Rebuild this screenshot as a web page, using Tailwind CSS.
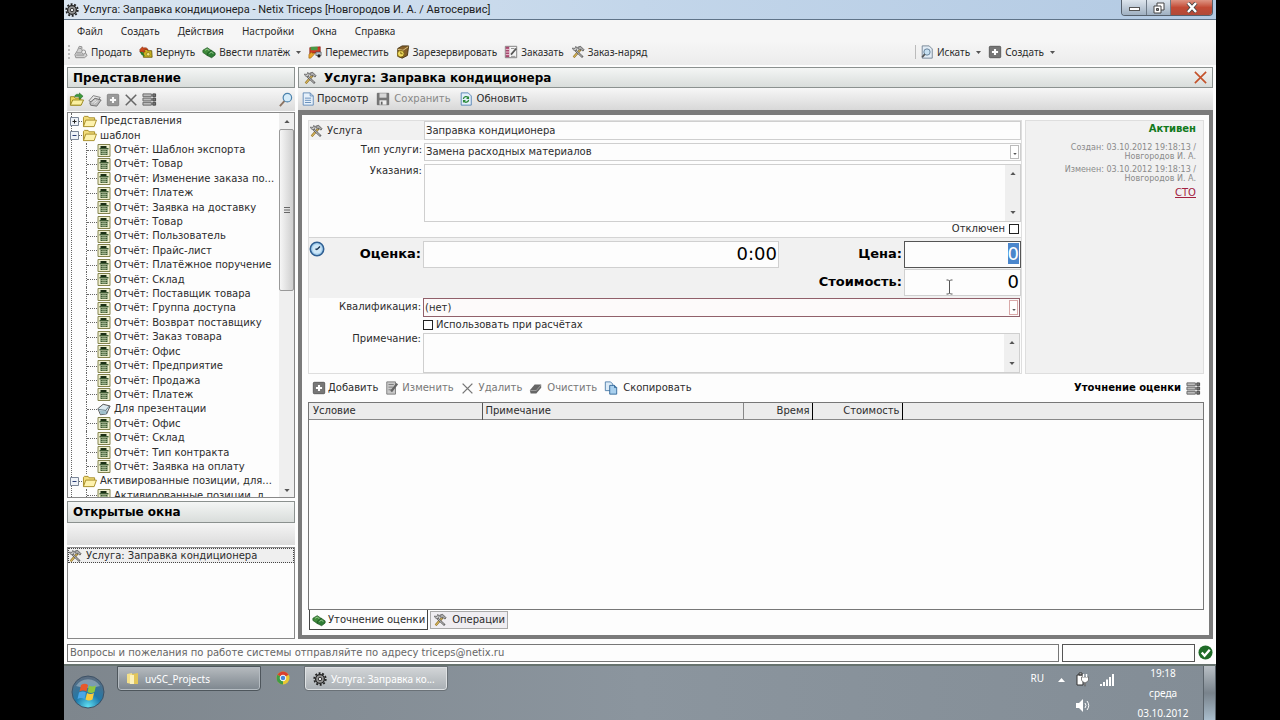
<!DOCTYPE html>
<html lang="ru">
<head>
<meta charset="utf-8">
<title>Услуга: Заправка кондиционера - Netix Triceps</title>
<script src="https://cdn.jsdelivr.net/npm/@tailwindcss/browser@4"></script>
</head>
<body class="min-h-screen bg-black font-['DejaVu_Sans',Verdana,sans-serif] text-[10px] leading-[14px] text-[#2c2c2c]">

<svg class="hidden" aria-hidden="true">
  <symbol id="gear" viewBox="0 0 16 16"><circle cx="8" cy="8" r="5" fill="#999" stroke="#222" stroke-width="1.5"/><circle cx="8" cy="8" r="6.600" fill="none" stroke="#222" stroke-width="2" stroke-dasharray="2.2 1.9"/><circle cx="8" cy="8" r="2" fill="#eee" stroke="#222"/></symbol>
  <symbol id="tools" viewBox="0 0 16 16"><path d="M3 14 11 5" stroke="#8a6a20" stroke-width="2.6"/><path d="M3 14 10.500 5.500" stroke="#e8c869" stroke-width="1.200"/><path d="M5 6 13.500 14" stroke="#555" stroke-width="2.400"/><path d="M5 6 13 13.500" stroke="#ddd" stroke-width="1"/><path d="M1.500 3.500 3 6l3 .5L7 4 5.500 1.500 4.500 4z" fill="#ccc" stroke="#555" stroke-width=".8"/><path d="M7.500 2.500 11 1.500l4 4-1.500 1.500L11.500 5 10 6 8.500 4.500z" fill="#aaa" stroke="#444" stroke-width=".8"/></symbol>
  <symbol id="sell" viewBox="0 0 16 16"><path d="M4 6 6 1.500 9 2v4l3 1 3 5-3 2.500H2L1 11z" fill="#d2d2d2" stroke="#888"/><circle cx="11" cy="8" r="2.300" fill="#eee" stroke="#888"/><path d="M3 9h5M2.500 11.500h9M6 4h2" stroke="#888"/></symbol>
  <symbol id="return" viewBox="0 0 16 16"><path d="M5 5h4l1 1.500h4.500L15 14H5z" fill="#c9b21f" stroke="#6c5b0c"/><circle cx="10.500" cy="10.500" r="2" fill="#f3e680" stroke="#7d6d10" stroke-width=".7"/><path d="M1 5 4 2l1 1.500c3-1 5 0 5.500 2.500-2-1.500-3.500-1-4.500 0L7 8H1z" fill="#cc4a1e" stroke="#7c2a0c" stroke-width=".6"/><path d="M1 8h3l3 5-4-1.500z" fill="#2d7a2a"/></symbol>
  <symbol id="money" viewBox="0 0 16 16"><path d="M1 6 6 3l5 3.500v3L6 12 1 8.500z" fill="#3f8a3a" stroke="#1f5a22" stroke-width=".8"/><path d="M6 9.500 10.500 6 15 9v2.500L11 14.500 6 12z" fill="#2f7d35" stroke="#1a4f1e" stroke-width=".8"/><path d="M3.500 6 6 4.800 8.500 6.500M8.500 9.800l2-1.600 2.500 1.500" stroke="#a5d39a" fill="none"/></symbol>
  <symbol id="truck" viewBox="0 0 16 16"><path d="M2 3 14 2v7H6L2 11z" fill="#d33a24" stroke="#7d1e12" stroke-width=".7"/><path d="M3 2h8v4H3z" fill="#4a9a45"/><path d="M9 8h6v4H9z" fill="#b9c4cc" stroke="#444" stroke-width=".7"/><circle cx="12.500" cy="12.500" r="1.800" fill="#222"/><path d="M1 11 4 8l1 1.500h3L6 12l-3 3H1z" fill="#e9a52a" stroke="#8d5b0b" stroke-width=".6"/></symbol>
  <symbol id="box" viewBox="0 0 16 16"><path d="M2 4 7 1h7.500L13 12l-6 3-5-2z" fill="#85602a" stroke="#42300f"/><path d="m2 5 6 1 6-4" fill="none" stroke="#e6cf8a"/><circle cx="5.500" cy="10" r="3.800" fill="#f1dc60" stroke="#7a6412"/><path d="M5.500 7.500V10h2" fill="none" stroke="#6b570c"/></symbol>
  <symbol id="order" viewBox="0 0 16 16"><path d="M1.500 1.500h13v13h-13z" fill="#f4f4f4" stroke="#777"/><path d="M2 2h4v12H2z" fill="#a9486f"/><path d="M2 5h4M2 8h4M2 11h4" stroke="#f1d9e3"/><path d="M8 11 14 4" stroke="#555" stroke-width="2"/><path d="M8 4h4M8 13h5" stroke="#888"/></symbol>
  <symbol id="search-doc" viewBox="0 0 16 16"><path d="M2.500 1h8L14 4.500V15H2.500z" fill="#e2ecf5" stroke="#6e7f90"/><circle cx="8" cy="8" r="3.600" fill="#c6dff0" stroke="#5a7790"/><path d="M5.500 10.500 2.500 14" stroke="#555" stroke-width="2"/></symbol>
  <symbol id="plus" viewBox="0 0 16 16"><rect x="1.500" y="1.500" width="13" height="13" rx="1" fill="#777" stroke="#555"/><path d="M8 4.500v7M4.500 8h7" stroke="#fff" stroke-width="2.400"/></symbol>
  <symbol id="open" viewBox="0 0 16 16"><path d="M1.500 14V5h4l1 1.500h6V14z" fill="#efd75c" stroke="#97851d"/><path d="M1.500 14 4 8.500h11.500L13 14z" fill="#fbf0a0" stroke="#97851d"/><path d="M6 5c1-3 3-3 5-2V1l4 3.500L11 8V5.500C9 4.500 8 5 6 5z" fill="#3c9a3a" stroke="#1c6420" stroke-width=".6"/></symbol>
  <symbol id="cards" viewBox="0 0 16 16"><path d="m1 9 5-6 8 2-5 7z" fill="#e6e6e6" stroke="#777"/><path d="m2 11 6-5 7 2-5 7-7-1z" fill="#bbb" stroke="#666"/><path d="m5 11 4-3M7 12l4-3" stroke="#eee"/></symbol>
  <symbol id="cross" viewBox="0 0 16 16"><path d="M2 2 14 14M14 2 2 14" stroke="currentColor" stroke-width="1.700"/></symbol>
  <symbol id="grid" viewBox="0 0 16 16"><path d="M1 2h9v3H1zM1 6.500h9v3H1zM1 11h9v3H1z" fill="#bbb" stroke="#666"/><path d="M11.500 2h3v3h-3zM11.500 6.500h3v3h-3zM11.500 11h3v3h-3z" fill="#777" stroke="#444"/></symbol>
  <symbol id="lens" viewBox="0 0 16 16"><path d="M7 9.500 2 15" stroke="#8d7462" stroke-width="2"/><circle cx="10" cy="6" r="4.500" fill="#d6ecf9" stroke="#4c83ad" stroke-width="1.300"/></symbol>
  <symbol id="doc" viewBox="0 0 16 16"><path d="M2.500 1h8L14 4.500V15H2.500z" fill="#e6f0fa" stroke="#5b86b5"/><path d="M10.500 1v3.500H14M4.500 7h7M4.500 9.500h7M4.500 12h7" fill="none" stroke="#5b86b5"/></symbol>
  <symbol id="save" viewBox="0 0 16 16"><path d="M1.500 1.500h13v13h-13z" fill="#777" stroke="#666"/><path d="M4 1.500h8v5H4z" fill="#d8d8d8"/><path d="M4 9.500h8v5H4z" fill="#eee"/><path d="M5.500 11h2v3.500h-2z" fill="#666"/></symbol>
  <symbol id="refresh" viewBox="0 0 16 16"><path d="M2.500 1h8L14 4.500V15H2.500z" fill="#e4f0fb" stroke="#4e7fb0"/><path d="M5 8c.5-3 4-3.500 5.500-1.500M11 9c-.5 3-4 3.500-5.500 1.500" fill="none" stroke="#2c8a3a" stroke-width="1.500"/><path d="M11.500 4.500v3.500H8zM4.500 12.500V9H8z" fill="#2c8a3a"/></symbol>
  <symbol id="folder" viewBox="0 0 16 14"><path d="M1.500 12.500v-10l1-1h4l1 1.500h6v3" fill="#f2dc7a" stroke="#a58a25"/><path d="m1.500 12.500 2.500-7h11.500l-2.500 7z" fill="#fdf2ae" stroke="#a58a25"/></symbol>
  <symbol id="report" viewBox="0 0 13 13"><path d="M.5.500h12v12H.5z" fill="#efefcf" stroke="#84844e"/><path d="M3 2h6v2H3z" fill="#1c3016"/><path d="M2 4h9v1.500H2zM3 6h7v5H3z" fill="#3f5d34"/><path d="M3 7.500h7M3 9.500h7M5.500 6v5M7.500 6v5" stroke="#c9d6b2" stroke-width=".6"/></symbol>
  <symbol id="tag" viewBox="0 0 16 14"><path d="m1 6 6-5 8 2-4 9-7 1z" fill="#dceaf0" stroke="#444"/><path d="m2 7 8 1 4-5M10 8l1 4" fill="none" stroke="#537080"/><path d="m2.500 8 7 1 1 3-6 .5z" fill="#9fc0cb"/></symbol>
  <symbol id="minus-box" viewBox="0 0 9 9"><path d="M.5.500h8v8h-8z" fill="#eef2f8" stroke="#7b8698"/><path d="M2.500 4.500h4" stroke="#2b3f77"/></symbol>
  <symbol id="plus-box" viewBox="0 0 9 9"><path d="M.5.500h8v8h-8z" fill="#eef2f8" stroke="#7b8698"/><path d="M2.500 4.500h4M4.500 2.500v4" stroke="#222"/></symbol>
  <symbol id="clock" viewBox="0 0 16 16"><circle cx="8" cy="8" r="6.700" fill="#a9d2ef" stroke="#2f5f93" stroke-width="1.600"/><circle cx="8" cy="8" r="4.500" fill="#cfe7f7"/><path d="M8 8.500 11 5.500M8 8.500 6.500 8" stroke="#1c3350" stroke-width="1.400"/></symbol>
  <symbol id="edit" viewBox="0 0 16 16"><path d="M2 1h10v14H2z" fill="#c9c9c9" stroke="#777"/><path d="M4 4h6M4 7h5M4 10h4" stroke="#777"/><path d="M7 12 14 3" stroke="#666" stroke-width="2.600"/></symbol>
  <symbol id="eraser" viewBox="0 0 16 16"><path d="m1 10 6-7h8v4l-6 7H2z" fill="#666"/><path d="M1.500 10.500H9L14.500 4" fill="none" stroke="#aaa"/></symbol>
  <symbol id="copy" viewBox="0 0 16 16"><path d="M1.500 1h6L10 3.500V11H1.500z" fill="#dcebf7" stroke="#4a7aa8"/><path d="M6.500 5h5.500l2.500 2.500V15h-8z" fill="#a9d0ee" stroke="#2f6597"/><path d="M12 5v2.500h2.500" fill="none" stroke="#2f6597"/></symbol>
  <symbol id="up" viewBox="0 0 7 4"><path d="M0 4 3.500 0 7 4z" fill="#555"/></symbol>
  <symbol id="down" viewBox="0 0 7 4"><path d="M0 0h7L3.500 4z" fill="#555"/></symbol>
  <symbol id="ok" viewBox="0 0 16 16"><circle cx="8" cy="8" r="7.500" fill="#1f6b27"/><path d="m4 8 3 3.500L12.500 5" fill="none" stroke="#fff" stroke-width="2.500"/></symbol>
</svg>

<div class="mx-16 flex min-h-screen flex-col overflow-hidden bg-[#fdfdfd]">

  <!-- Title bar -->
  <header class="flex h-5 items-center border-b border-[#5f7388] bg-linear-to-r from-[#dbe6f1] via-[#c3d6ea] to-[#b3cae3] pr-[3px] pl-px font-['Roboto',sans-serif] text-[11px] text-[#222]">
    <svg class="mr-1 size-[14px]"><use href="#gear"/></svg>
    <h1 class="flex-1 whitespace-nowrap">Услуга: Заправка кондиционера - Netix Triceps [Новгородов И. А. / Автосервис]</h1>
    <div class="flex self-start overflow-hidden rounded-b-sm border border-t-0 border-[#55606c]">
      <button aria-label="Свернуть" class="flex h-[15px] w-[25px] items-end justify-center border-r border-[#6d7986] bg-linear-to-b from-[#dde5ed] to-[#9fb0c1] pb-1"><span class="h-1 w-[11px] border border-[#555] bg-white"></span></button>
      <button aria-label="Свернуть в окно" class="flex h-[15px] w-6 items-center justify-center border-r border-[#6d7986] bg-linear-to-b from-[#dde5ed] to-[#9fb0c1]"><svg class="size-3" viewBox="0 0 12 12"><path d="M4 1h7v7H4z" fill="#fff" stroke="#444"/><path d="M1 4h7v7H1z" fill="#fff" stroke="#444"/><path d="M3.500 6.500h2v2h-2z" fill="#888" stroke="#444"/></svg></button>
      <button aria-label="Закрыть" class="flex h-[15px] w-[41px] items-center justify-center bg-linear-to-b from-[#dd9484] via-[#c24a35] to-[#b14a38]"><svg class="h-[11px] w-3" viewBox="0 0 12 11"><path d="m2 1 8 9M10 1 2 10" stroke="#444" stroke-width="4"/><path d="m2 1 8 9M10 1 2 10" stroke="#fff" stroke-width="2.400"/></svg></button>
    </div>
  </header>

  <!-- Menu -->
  <nav class="flex h-[21px] items-center gap-[18px] bg-[#f6f6f6] pl-[13px] font-['Noto_Sans',sans-serif]">
    <button>Файл</button><button>Создать</button><button>Действия</button><button>Настройки</button><button>Окна</button><button>Справка</button>
  </nav>

  <!-- Main tool bar -->
  <div class="flex h-6 items-center justify-between bg-linear-to-b from-[#f6f6f6] to-[#ececec] pr-[161px] pb-[2px] font-['Noto_Sans',sans-serif]">
    <div class="flex items-center gap-[7px] pl-1">
      <div class="flex items-center gap-1"><span class="h-[14px] border-l-2 border-dotted border-[#bbb]"></span>
      <button class="flex items-center gap-[3px]"><svg class="size-[14px]"><use href="#sell"/></svg>Продать</button></div>
      <button class="flex items-center gap-[3px]"><svg class="size-[14px]"><use href="#return"/></svg>Вернуть</button>
      <button class="flex items-center gap-[3px]"><svg class="size-[14px]"><use href="#money"/></svg>Ввести платёж<svg class="ml-[3px] h-[3px] w-[5px]"><use href="#down"/></svg></button>
      <button class="flex items-center gap-[3px]"><svg class="size-[14px]"><use href="#truck"/></svg>Переместить</button>
      <button class="flex items-center gap-[3px]"><svg class="size-[14px]"><use href="#box"/></svg>Зарезервировать</button>
      <button class="flex items-center gap-[3px]"><svg class="size-[14px]"><use href="#order"/></svg>Заказать</button>
      <button class="flex items-center gap-[3px]"><svg class="size-[14px]"><use href="#tools"/></svg>Заказ-наряд</button>
    </div>
    <div class="flex items-center gap-[7px] border-l border-[#bbb] pl-1">
      <button class="flex items-center gap-[3px]"><svg class="size-[14px]"><use href="#search-doc"/></svg>Искать<svg class="ml-[3px] h-[3px] w-[5px]"><use href="#down"/></svg></button>
      <button class="flex items-center gap-[3px]"><svg class="size-[14px]"><use href="#plus"/></svg>Создать<svg class="ml-[3px] h-[3px] w-[5px]"><use href="#down"/></svg></button>
    </div>
  </div>

  <div class="flex flex-1 gap-[3px] pt-[2px] pr-[3px] pl-[3px]">

    <!-- Left column -->
    <aside class="flex w-[228px] shrink-0 flex-col">
      <h2 class="flex h-[21px] items-center border border-[#8b918f] bg-linear-to-b from-[#f4f6f5] to-[#d9dddb] pl-[5px] text-[12px] font-bold text-black">Представление</h2>
      <div class="flex h-[23px] items-center gap-1 bg-linear-to-b from-[#f7f7f7] to-[#dcdcdc] px-[2px]">
        <button aria-label="Открыть"><svg class="size-[15px]"><use href="#open"/></svg></button>
        <button aria-label="Карточки"><svg class="size-[14px]"><use href="#cards"/></svg></button>
        <button aria-label="Добавить"><svg class="size-[14px] opacity-70"><use href="#plus"/></svg></button>
        <button aria-label="Удалить" class="text-[#666]"><svg class="size-[14px]"><use href="#cross"/></svg></button>
        <button aria-label="Таблица"><svg class="size-[15px]"><use href="#grid"/></svg></button>
        <button aria-label="Найти" class="ml-auto"><svg class="size-[15px]"><use href="#lens"/></svg></button>
      </div>
      <div class="mt-px flex h-[386px] overflow-hidden border border-[#888] bg-[#fdfdfd]">
        <ul id="tree" class="ml-[3px] flex h-[390px] min-w-0 flex-1 flex-col border-l border-dotted border-[#666] pt-px"></ul>
        <div class="flex w-[15px] flex-col items-center bg-[#efefef]">
          <div class="flex h-4 items-center"><svg class="h-[3px] w-[6px]"><use href="#up"/></svg></div>
          <div class="flex h-[162px] w-full items-center justify-center rounded-xs border border-[#999] bg-linear-to-r from-[#f6f6f6] to-[#cfcfcf]"><svg class="h-2 w-[6px]" viewBox="0 0 6 8"><path d="M0 1.500h6M0 4h6M0 6.500h6" stroke="#666"/></svg></div>
          <div class="mt-auto flex h-[14px] items-center"><svg class="h-[3px] w-[6px]"><use href="#down"/></svg></div>
        </div>
      </div>
      <h2 class="mt-[3px] flex h-[22px] items-center border border-[#8b918f] bg-linear-to-b from-[#f4f6f5] to-[#d9dddb] pl-[5px] text-[12px] font-bold text-black">Открытые окна</h2>
      <div class="h-[22px] bg-linear-to-b from-[#f5f5f5] to-[#dcdcdc]"></div>
      <div class="mt-[2px] flex-1 border border-[#888]">
        <button class="flex h-[15px] w-full items-center gap-1 border border-dotted border-[#444] bg-[#efefef]"><svg class="-ml-px size-[14px]"><use href="#tools"/></svg>Услуга: Заправка кондиционера</button>
      </div>
    </aside>

    <!-- Document -->
    <main class="flex min-w-0 flex-1 flex-col">
      <div class="flex h-[21px] items-center border border-[#8b918f] bg-linear-to-b from-[#f4f6f5] to-[#d9dddb] px-1 text-[12px] text-black">
        <svg class="mr-[7px] size-[14px]"><use href="#tools"/></svg>
        <h2 class="flex-1 font-bold">Услуга: Заправка кондиционера</h2>
        <button aria-label="Закрыть" class="text-[#c4522a]"><svg class="size-[15px]"><use href="#cross"/></svg></button>
      </div>
      <div class="flex h-[22px] items-center gap-2 bg-linear-to-b from-[#f7f7f7] to-[#d8d8d8] pl-[3px]">
        <button class="flex items-center gap-[2px]"><svg class="size-[14px]"><use href="#doc"/></svg>Просмотр</button>
        <button class="flex items-center gap-1 text-[#888]"><svg class="size-[14px]"><use href="#save"/></svg>Сохранить</button>
        <button class="flex items-center gap-1"><svg class="size-[14px]"><use href="#refresh"/></svg>Обновить</button>
      </div>

      <div class="flex flex-1 flex-col border-4 border-t-[5px] border-[#7b7b7b] bg-[#fdfdfd] py-[5px] pr-[5px] pl-[6px]">
        <form class="flex gap-[3px]">
          <div class="min-w-0 flex-1 border border-[#dedede]">
            <div class="grid grid-cols-[115px_1fr] gap-y-[3px]">
              <label for="name" class="flex items-center gap-1 bg-[#f1f1f1]"><svg class="size-[14px]"><use href="#tools"/></svg>Услуга</label>
              <input id="name" value="Заправка кондиционера" class="h-[19px] min-w-0 border border-[#cfcfcf] bg-[#fdfdfd] px-px outline-none">
              <label for="kind" class="pr-[2px] text-right">Тип услуги:</label>
              <div class="relative"><select id="kind" class="h-[18px] w-full appearance-none border border-[#cfcfcf] px-px outline-none"><option>Замена расходных материалов</option></select><span class="pointer-events-none absolute top-[2px] right-[2px] flex h-[14px] w-[9px] items-end justify-center border border-[#bbb] bg-white pb-[3px]"><svg class="h-[2px] w-1"><use href="#down" /></svg></span></div>
              <label for="notes" class="pr-[2px] text-right">Указания:</label>
              <div class="flex h-[58px] border border-[#cfcfcf]"><textarea id="notes" class="min-w-0 flex-1 resize-none outline-none"></textarea><div class="flex w-[15px] flex-col items-center justify-between bg-[#efefef] py-[7px]"><svg class="h-[3px] w-[6px]"><use href="#up"/></svg><svg class="h-[3px] w-[6px]"><use href="#down"/></svg></div></div>
            </div>
            <label class="flex h-[14px] items-center justify-end gap-1 pr-[2px]">Отключен<input type="checkbox" class="size-[10px] appearance-none border border-[#222] bg-white"></label>

            <div class="relative mt-px flex h-[61px] items-start gap-[2px] border-t border-[#d4d4d4] bg-[#f1f1f1] pt-[3px] text-[13px] leading-[26px] font-bold text-black">
              <div class="flex w-[112px] items-start justify-between"><svg class="size-4"><use href="#clock"/></svg><label for="rate">Оценка:</label></div>
              <input id="rate" value="0:00" class="h-[27px] w-[50%] min-w-0 border border-[#d0d0d0] bg-[#fdfdfd] px-px pb-[3px] text-right text-[18px] font-normal outline-none">
              <div class="grid flex-1 grid-cols-[1fr_117px] gap-x-[2px] gap-y-px">
                <label for="price" class="text-right">Цена:</label>
                <input id="price" value="0" class="h-[27px] min-w-0 border border-[#555] bg-[#fdfdfd] px-px pb-[3px] text-right text-[18px] font-normal outline-none selection:bg-[#4a86cc] selection:text-white">
                <label for="cost" class="text-right">Стоимость:</label>
                <input id="cost" value="0" class="h-[27px] min-w-0 border border-[#d0d0d0] bg-[#fdfdfd] px-px pb-[3px] text-right text-[18px] font-normal outline-none">
              </div>
              <svg class="absolute right-[68px] bottom-[3px] h-4 w-[7px]" viewBox="0 0 7 16"><path d="M.5 1h2l1 1 1-1h2M.5 15h2l1-1 1 1h2M3.500 2v12" fill="none" stroke="#555"/></svg>
            </div>

            <div class="grid grid-cols-[114px_1fr] gap-y-px pr-px">
              <label for="skill" class="pt-[2px] pr-[2px] text-right">Квалификация:</label>
              <div class="relative"><select id="skill" class="h-[19px] w-full appearance-none border border-[#91606a] bg-[#fdfafa] px-px outline-none"><option>(нет)</option></select><span class="pointer-events-none absolute top-[2px] right-[2px] flex h-[15px] w-[9px] items-end justify-center border border-[#d9a9a9] bg-white pb-[3px]"><svg class="h-[2px] w-1"><use href="#down"/></svg></span></div>
              <label class="col-start-2 flex h-[14px] items-center gap-[3px]"><input type="checkbox" class="size-[10px] appearance-none border border-[#222] bg-white">Использовать при расчётах</label>
              <label for="remark" class="-mt-px pr-[2px] text-right">Примечание:</label>
              <div class="flex h-10 border border-[#cfcfcf]"><textarea id="remark" class="min-w-0 flex-1 resize-none outline-none"></textarea><div class="flex w-[15px] flex-col items-center justify-between bg-[#efefef] py-[7px]"><svg class="h-[3px] w-[6px]"><use href="#up"/></svg><svg class="h-[3px] w-[6px]"><use href="#down"/></svg></div></div>
            </div>
          </div>

          <section class="w-[179px] shrink-0 border border-[#dedede] bg-[#f1f1f1] pt-px pr-[7px] text-right text-[8px] leading-[9px] text-[#8a8a8a]">
            <p class="mb-[7px] text-[10px] leading-[14px] font-bold text-[#117a1c]">Активен</p>
            <p class="mb-1">Создан: 03.10.2012 19:18:13 /<br>Новгородов И. А.</p>
            <p class="mb-[3px]">Изменен: 03.10.2012 19:18:13 /<br>Новгородов И. А.</p>
            <a href="#" class="text-[10px] leading-[14px] text-[#a3213f] underline">СТО</a>
          </section>
        </form>

        <div class="flex h-7 items-center gap-[7px] pr-[3px] pl-1">
          <button class="flex items-center gap-[2px]"><svg class="size-[14px]"><use href="#plus"/></svg>Добавить</button>
          <button class="flex items-center gap-[3px] text-[#777]"><svg class="size-[14px]"><use href="#edit"/></svg>Изменить</button>
          <button class="flex items-center gap-[5px] text-[#777]"><svg class="size-[13px]"><use href="#cross"/></svg>Удалить</button>
          <button class="flex items-center gap-[5px] text-[#777]"><svg class="size-[13px]"><use href="#eraser"/></svg>Очистить</button>
          <button class="flex items-center gap-[5px]"><svg class="size-[14px]"><use href="#copy"/></svg>Скопировать</button>
          <span class="ml-auto flex items-center gap-[5px] font-bold text-black">Уточнение оценки<svg class="size-[15px]"><use href="#grid"/></svg></span>
        </div>

        <div class="flex-1 border border-[#777]">
          <table class="w-full table-fixed border-collapse">
            <thead><tr class="h-4 border-b border-[#888] bg-[#ececec]">
              <th class="w-[173px] border-r border-[#555] px-1 text-left font-normal">Условие</th>
              <th class="w-[261px] border-r border-[#888] px-[3px] text-left font-normal">Примечание</th>
              <th class="w-[69px] border-r border-black px-[2px] text-right font-normal">Время</th>
              <th class="w-[90px] border-r border-black px-[2px] text-right font-normal">Стоимость</th>
              <th></th>
            </tr></thead>
          </table>
        </div>
        <div class="flex items-start gap-[2px] pl-px">
          <button class="flex h-5 items-center gap-[2px] border border-t-0 border-[#444] bg-[#fdfdfd] px-[2px]"><svg class="size-[14px]"><use href="#money"/></svg>Уточнение оценки</button>
          <button class="mt-px flex h-[18px] items-center gap-[5px] border border-[#aaa] bg-[#efedf1] px-[2px]"><svg class="size-[14px]"><use href="#tools"/></svg>Операции</button>
        </div>
      </div>
    </main>
  </div>

  <!-- Status bar -->
  <footer class="flex h-[25px] items-center gap-[3px] pt-[2px] pr-[3px] pl-[3px] text-[#666]">
    <div class="h-[18px] flex-1 border border-[#777] px-[2px] leading-4">Вопросы и пожелания по работе системы отправляйте по адресу triceps@netix.ru</div>
    <div class="h-[18px] w-[133px] border border-[#555]"></div>
    <svg class="size-[15px]"><use href="#ok"/></svg>
  </footer>

  <!-- Taskbar -->
  <div class="flex h-14 items-start border-t-2 border-[#67736f] bg-linear-to-r from-[#7e868d] via-[#8b959e] to-[#838d96] pl-[7px] font-['Noto_Sans',sans-serif] text-white">
    <button aria-label="Пуск" class="mt-[9px] mr-[12px]"><svg class="size-[34px]" viewBox="0 0 34 34"><defs><radialGradient id="orb" cx=".5" cy=".95" r=".9"><stop offset="0" stop-color="#5fe0f2"/><stop offset=".45" stop-color="#1f79ab"/><stop offset="1" stop-color="#5a6c80"/></radialGradient></defs><circle cx="17" cy="17" r="16" fill="url(#orb)" stroke="#3e5266"/><path d="M5 11a14 14 0 0 1 24 0Q17 15 5 11z" fill="#fff" opacity=".3"/><path d="M10 10q4-2.500 7 0l-1.500 6.500q-3.500-2-7 0z" fill="#e8582a"/><path d="M18 10.500q3.500 2 7 0l-1.500 6.500q-3.500 2-7 0z" fill="#8fc640"/><path d="M8 17.500q4-2 7 0L13.500 24q-3.500-2-7 0z" fill="#4ba6e6"/><path d="M16 18q3.500 2 7 0l-1.500 6.500q-3.500 2-7 0z" fill="#fbcb3c"/></svg></button>
    <button class="flex h-[25px] w-[144px] items-center gap-[6px] rounded-b-sm border border-[#4e565c] bg-linear-to-b from-[#b6bbbf] to-[#7d868e] pl-2 shadow-[inset_0_0_0_1px_#b5bcc2]"><svg class="size-[13px]" viewBox="0 0 13 13"><path d="M1 2 6 1v11L1 11z" fill="#f4e08a"/><path d="m6 2 6-1v11H6z" fill="#e2c65a"/><path d="M4 3h4v9H4z" fill="#fbf1bd"/></svg>uvSC_Projects</button>
    <button aria-label="Google Chrome" class="mt-[5px] mr-[14px] ml-[15px]"><svg class="size-[14px]" viewBox="0 0 14 14"><circle cx="7" cy="7" r="6.500" fill="#e9c832"/><path d="M7 7 1.400 3.800A6.500 6.500 0 0 1 12.600 3.800z" fill="#d9402e"/><path d="M7 7 1.400 3.800A6.500 6.500 0 0 0 7 13.500z" fill="#3f9b46"/><circle cx="7" cy="7" r="2.800" fill="#4b86d8" stroke="#fff"/></svg></button>
    <button class="flex h-[25px] w-[144px] items-center gap-1 rounded-b-sm border border-[#6a7177] bg-linear-to-b from-[#d3d6d8] to-[#a9afb4] pl-2 shadow-[inset_0_0_0_1px_#dfe2e4]"><svg class="size-[14px]"><use href="#gear"/></svg>Услуга: Заправка ко...</button>
    <div class="ml-auto flex items-start gap-[14px]">
      <span class="mt-[5px]">RU</span>
      <svg class="mt-[12px] h-[4px] w-[7px]" viewBox="0 0 7 4"><path d="M0 4 3.500 0 7 4z" fill="#fff"/></svg>
      <div class="-ml-[3px] flex flex-col gap-3 pt-[6px]">
        <svg class="h-[15px] w-[13px]" viewBox="0 0 13 15"><path d="M1 3h6v10H1zM3 1h3v2H3z" fill="#fff" stroke="#333"/><path d="M5.500 5h7v3q-.5 2-3 2.500V14h-1v-3.500q-2.500-.5-3-2.500z" fill="#fff" stroke="#555" stroke-width=".7"/><path d="M7.500 2v3M10.500 2v3" stroke="#fff" stroke-width="1.500"/></svg>
        <svg class="h-[13px] w-[14px]" viewBox="0 0 14 13"><path d="M0 4h3l4-4v13L3 9H0z" fill="#fff"/><path d="M9 4q2 2.500 0 5M11 2q3.500 4.500 0 9" fill="none" stroke="#fff"/></svg>
      </div>
      <svg class="mt-[8px] -ml-[4px] h-3 w-[14px]" viewBox="0 0 14 12"><path d="M0 10h2v2H0zM3 8h2v4H3zM6 5.500h2V12H6zM9 3h2v9H9zM12 0h2v12h-2z" fill="#fff"/></svg>
      <div class="ml-[8px] flex w-[54px] flex-col text-center leading-5"><span class="-mt-[3px]">19:18</span><span>среда</span><span>03.10.2012</span></div>
      <button aria-label="Показать рабочий стол" class="-ml-px h-[54px] w-[13px] border-x border-[#5a636b] bg-linear-to-b from-[#b9c0c6] via-[#79838c] to-[#a9bdcc]"></button>
    </div>
  </div>
</div>

<script>
  const reports = ["Отчёт: Шаблон экспорта", "Отчёт: Товар", "Отчёт: Изменение заказа по...", "Отчёт: Платеж", "Отчёт: Заявка на доставку", "Отчёт: Товар", "Отчёт: Пользователь", "Отчёт: Прайс-лист", "Отчёт: Платёжное поручение", "Отчёт: Склад", "Отчёт: Поставщик товара", "Отчёт: Группа доступа", "Отчёт: Возврат поставщику", "Отчёт: Заказ товара", "Отчёт: Офис", "Отчёт: Предприятие", "Отчёт: Продажа", "Отчёт: Платеж", "Для презентации", "Отчёт: Офис", "Отчёт: Склад", "Отчёт: Тип контракта", "Отчёт: Заявка на оплату"];
  const folder = (text, box) => `<li class="-ml-[2px] flex min-h-0 flex-1 items-center whitespace-nowrap"><svg class="size-[9px] shrink-0"><use href="#${box}"/></svg><span class="w-[3px] border-t border-dotted border-[#666]"></span><svg class="mr-[3px] h-[13px] w-[15px] shrink-0"><use href="#folder"/></svg>${text}</li>`;
  const leaf = text => `<li class="ml-[14px] flex min-h-0 flex-1 items-center border-l border-dotted border-[#666] whitespace-nowrap"><span class="w-[10px] border-t border-dotted border-[#666]"></span><svg class="mr-[3px] h-[13px] w-[14px] shrink-0"><use href="#${text.startsWith("Для") ? "tag" : "report"}"/></svg>${text}</li>`;
  document.getElementById("tree").innerHTML = folder("Представления", "plus-box") + folder("шаблон", "minus-box") + reports.map(leaf).join("") + folder("Активированные позиции, для...", "minus-box") + leaf("Активированные позиции, д");
  const price = document.getElementById("price");
  price.focus();
  price.select();
</script>
</body>
</html>
